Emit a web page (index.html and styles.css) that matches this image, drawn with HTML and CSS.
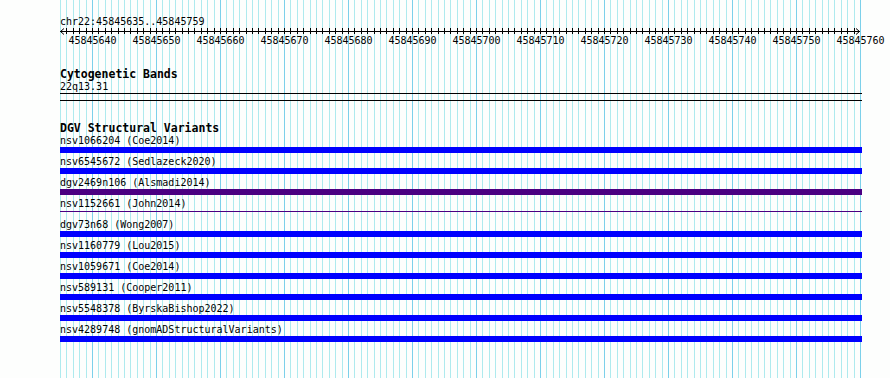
FILE: index.html
```html
<!DOCTYPE html>
<html lang="en">
<head>
  <meta charset="UTF-8" />
  <title>chr22:45845635..45845759</title>
  <link rel="stylesheet" href="styles.css">
</head>
<body>

<div id="browser">
  <!-- linhas guia (uma por base) -->
  <svg id="grade" width="890" height="378"></svg>

  <div class="trilhas">
    <div class="posicao">chr22:45845635..45845759</div>

    <svg id="regua" width="830" height="20">
      <line class="eixo" x1="0" y1="3.5" x2="800" y2="3.5" />
      <polyline class="seta" points="4,0.5 0.5,3.5 4,6.5" />
      <polyline class="seta" points="796,0.5 799.5,3.5 796,6.5" />
      <g id="ticks"></g>
      <g id="rotulos"></g>
    </svg>

    <div class="titulo cyto">Cytogenetic Bands</div>
    <div class="item">22q13.31</div>
    <div class="banda"></div>

    <div class="titulo dgv">DGV Structural Variants</div>
    <div id="variantes"></div>
  </div>
</div>

<script>
  const inicio = 45845635;
  const bases = 125;
  const pxBase = 6.4;
  const ns = "http://www.w3.org/2000/svg";

  function linha(pai, x1, y1, x2, y2, classe) {
    const l = document.createElementNS(ns, "line");
    l.setAttribute("x1", x1); l.setAttribute("y1", y1);
    l.setAttribute("x2", x2); l.setAttribute("y2", y2);
    if (classe) l.setAttribute("class", classe);
    pai.appendChild(l);
  }

  // grade de fundo
  const grade = document.getElementById("grade");
  for (let i = 0; i <= bases; i++) {
    const x = 60 + Math.round(i * pxBase) + 0.5;
    linha(grade, x, 0, x, 378, i % 10 == 5 ? "guia forte" : "guia");
  }

  // ticks e rótulos da régua
  const ticks = document.getElementById("ticks");
  const rotulos = document.getElementById("rotulos");
  for (let i = 1; i < bases; i++) {
    const x = Math.round(i * pxBase) + 0.5;
    linha(ticks, x, 0, x, 6, "tick");
    if (i % 10 == 5 || i == bases) {}
  }
  for (let i = 5; i <= bases; i += 10) {
    const t = document.createElementNS(ns, "text");
    t.setAttribute("x", Math.round(i * pxBase) + 0.5);
    t.setAttribute("y", 16);
    t.textContent = inicio + i;
    rotulos.appendChild(t);
  }

  const variantes = [
    ["nsv1066204 (Coe2014)", ""],
    ["nsv6545672 (Sedlazeck2020)", ""],
    ["dgv2469n106 (Alsmadi2014)", "roxa"],
    ["nsv1152661 (John2014)", "roxa fina"],
    ["dgv73n68 (Wong2007)", ""],
    ["nsv1160779 (Lou2015)", ""],
    ["nsv1059671 (Coe2014)", ""],
    ["nsv589131 (Cooper2011)", ""],
    ["nsv5548378 (ByrskaBishop2022)", ""],
    ["nsv4289748 (gnomADStructuralVariants)", ""]
  ];

  const lista = document.getElementById("variantes");
  variantes.forEach(([nome, tipo]) => {
    const div = document.createElement("div");
    div.className = "variante";
    div.innerHTML = `<div class="item">${nome}</div><div class="barra ${tipo}"></div>`;
    lista.appendChild(div);
  });
</script>

</body>
</html>
```

FILE: styles.css
```css
body {
  margin: 0;
  background: #fdfefd;
  color: #000;
  font-family: 'DejaVu Sans Mono', 'Liberation Mono', monospace;
}
#browser {
  position: relative;
  width: 890px;
  height: 378px;
  overflow: hidden;
}
#grade {
  position: absolute;
  top: 0;
  left: 0;
}
.guia {
  stroke: #aeeaee;
  stroke-width: 1;
}
.guia.forte {
  stroke: #7cd0ea;
}
.trilhas {
  position: relative;
  width: 802px;
  margin-left: 60px;
  padding-top: 16px;
}
.posicao,
.item {
  font-size: 10px;
  line-height: 12px;
  height: 12px;
  white-space: nowrap;
}
#regua {
  display: block;
  overflow: visible;
}
#regua .eixo,
#regua .tick,
#regua .seta {
  stroke: #000;
  stroke-width: 1;
  fill: none;
  shape-rendering: crispEdges;
}
#regua .seta {
  shape-rendering: auto;
}
#regua text {
  font-family: 'DejaVu Sans Mono', 'Liberation Mono', monospace;
  font-size: 10px;
  text-anchor: middle;
  fill: #000;
}
.titulo {
  font-size: 11.5px;
  font-weight: bold;
  line-height: 13px;
  height: 13px;
  white-space: nowrap;
}
.titulo.cyto {
  margin-top: 20px;
}
.titulo.dgv {
  margin-top: 21px;
}
.banda {
  height: 6px;
  border-top: 1px solid #000;
  border-bottom: 1px solid #000;
}
.variante {
  height: 21px;
}
.barra {
  height: 6px;
  background: #0000ff;
}
.barra.roxa {
  background: #4b0082;
}
.barra.fina {
  height: 1px;
  margin-top: 1px;
}
```
